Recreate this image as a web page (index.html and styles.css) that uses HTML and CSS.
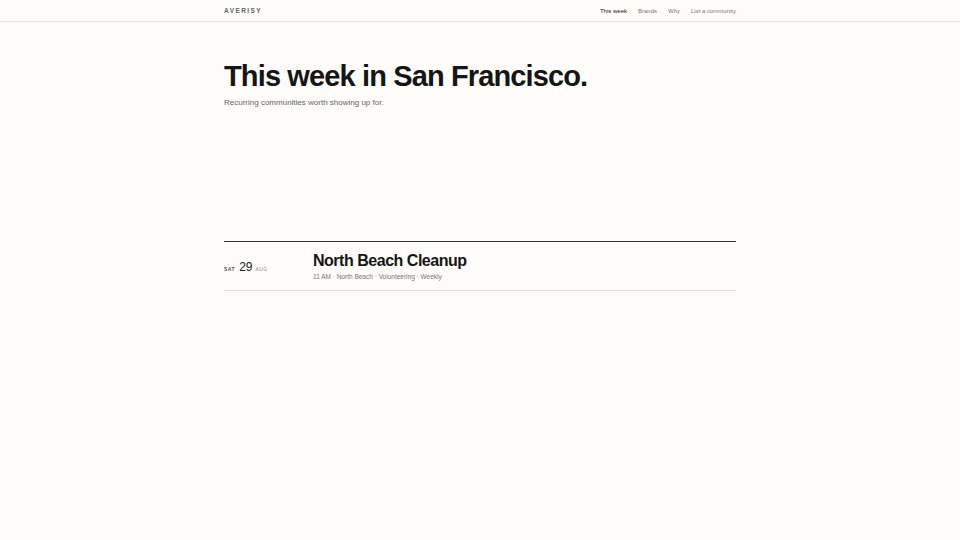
FILE: index.html
```html
<!DOCTYPE html>
<html lang="en">
<head>
<meta charset="utf-8">
<title>Averisy — This week in San Francisco</title>
<link rel="stylesheet" href="styles.css">
</head>
<body>
<header class="site-header">
  <div class="wrap header-inner">
    <a class="logo" href="#">AVERISY</a>
    <nav class="nav">
      <a class="nav-link active" href="#">This week</a>
      <a class="nav-link" href="#">Brands</a>
      <a class="nav-link" href="#">Why</a>
      <a class="nav-link" href="#">List a community</a>
    </nav>
  </div>
</header>
<main class="wrap">
  <section class="hero">
    <h1 class="hero-title">This week in San Francisco.</h1>
    <p class="hero-sub">Recurring communities worth showing up for.</p>
  </section>
  <section class="events">
    <article class="event">
      <div class="event-date">
        <span class="dow">SAT</span>
        <span class="day">29</span>
        <span class="mon">AUG</span>
      </div>
      <div class="event-body">
        <h2 class="event-title">North Beach Cleanup</h2>
        <p class="event-meta">11 AM · North Beach · Volunteering · Weekly</p>
      </div>
    </article>
  </section>
</main>
</body>
</html>
```
FILE: styles.css
```css
* { box-sizing: border-box; }
html, body { margin: 0; padding: 0; }
body {
  background: #fdfcf8;
  color: #151515;
  font-family: "Liberation Sans", Arial, sans-serif;
}
a { text-decoration: none; color: inherit; }
.wrap { width: 512px; margin: 0 auto; }

.site-header { border-bottom: 1px solid #e9e7e1; }
.header-inner {
  height: 21px;
  display: flex;
  align-items: center;
  justify-content: space-between;
}
.logo {
  font-size: 6.5px;
  letter-spacing: 0.22em;
  color: #666;
  font-weight: bold;
}
.nav { display: flex; gap: 11px; }
.nav-link { font-size: 6px; color: #777; }
.nav-link.active { color: #222; }

.hero { padding-top: 38px; height: 219px; }
.hero-title {
  margin: 0;
  font-size: 29px;
  line-height: 32px;
  letter-spacing: -0.03em;
  font-weight: bold;
  color: #151515;
}
.hero-sub {
  margin: 6px 0 0;
  font-size: 8px;
  color: #666;
}

.events { border-top: 1px solid #333; }
.event {
  display: flex;
  align-items: center;
  height: 49px;
  border-bottom: 1px solid #e3e1db;
}
.event-date {
  width: 89px;
  display: flex;
  align-items: baseline;
  gap: 4px;
  padding-top: 2px;
}
.dow { font-size: 5px; font-weight: bold; letter-spacing: 0.1em; color: #555; }
.day { font-size: 12px; color: #222; margin-right: -1px; }
.mon { font-size: 5px; letter-spacing: 0.08em; color: #888; }
.event-title {
  margin: 0;
  font-size: 16px;
  line-height: 18px;
  letter-spacing: -0.03em;
  font-weight: bold;
  color: #151515;
}
.event-meta {
  margin: 3px 0 0;
  font-size: 6.5px;
  color: #777;
}
```
